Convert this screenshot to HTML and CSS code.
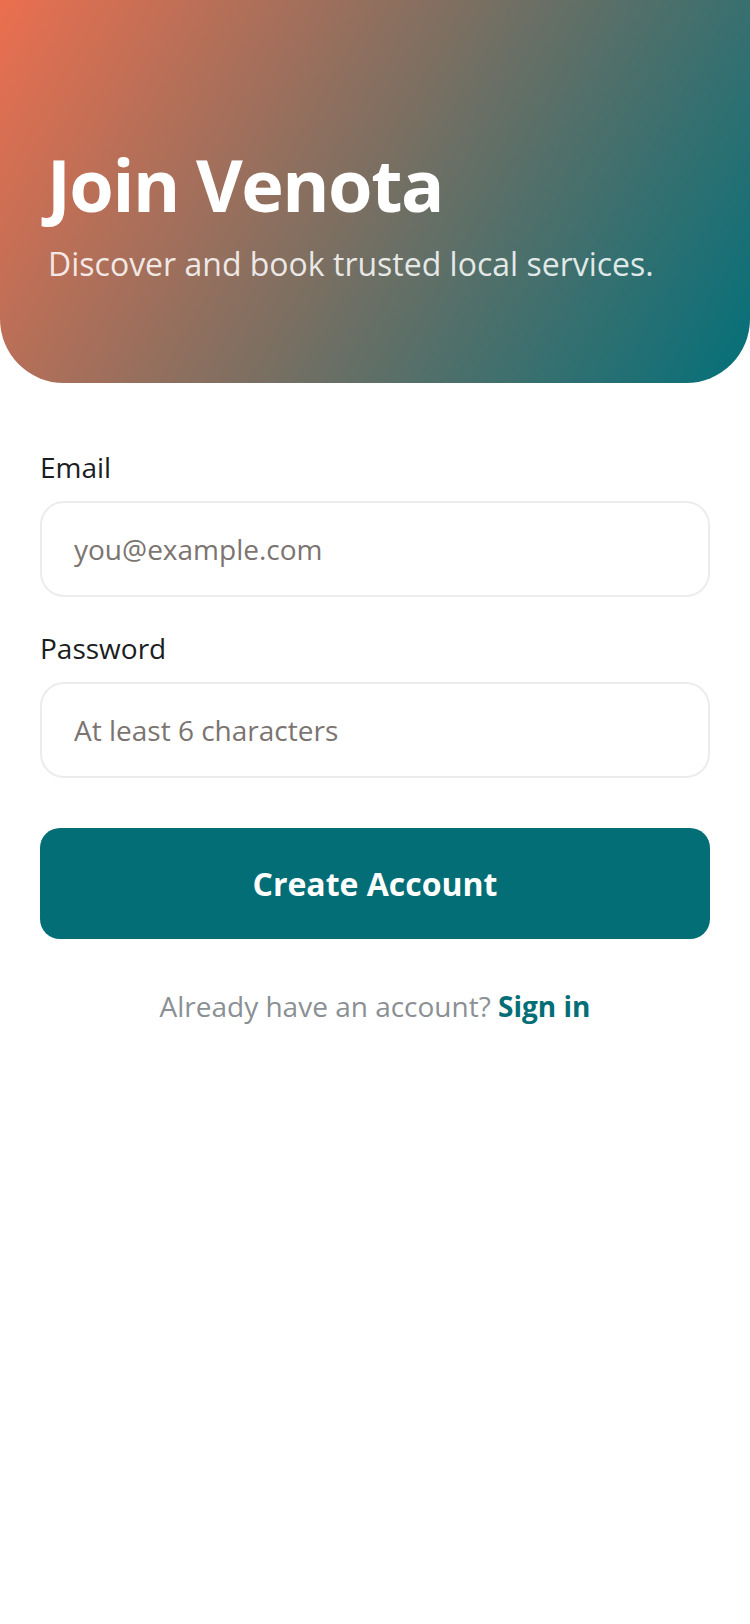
FILE: index.html
```html
<!DOCTYPE html>
<html lang="en">
<head>
    <meta charset="UTF-8">
    <meta name="viewport" content="width=device-width, initial-scale=1.0">
    <title>Join Venota</title>
    <link rel="stylesheet" href="styles.css">
</head>
<body>
    <div class="hero">
        <h1>Join Venota</h1>
        <p class="tagline">Discover and book trusted local services.</p>
    </div>
    <form class="signup" onsubmit="return false;">
        <label for="email">Email</label>
        <input type="email" id="email" placeholder="you@example.com">

        <label for="password">Password</label>
        <input type="password" id="password" placeholder="At least 6 characters">

        <button type="submit">Create Account</button>

        <p class="switch">Already have an account? <a href="#">Sign in</a></p>
    </form>
</body>
</html>
```

FILE: styles.css
```css
body {
    font-family: 'Open Sans', 'Noto Sans', sans-serif;
    background-color: #ffffff;
    margin: 0;
}
.hero {
    height: 383px;
    box-sizing: border-box;
    padding: 141px 44px 0;
    background: linear-gradient(120deg, #eb6f4f 0%, #786f62 50%, #03707a 100%);
    border-radius: 0 0 64px 64px;
}
h1 {
    margin: 0 0 0 3px;
    font-size: 72px;
    line-height: 1.2;
    font-weight: 700;
    letter-spacing: -1.5px;
    color: #ffffff;
}
.tagline {
    margin: 15px 0 0 4px;
    font-size: 32px;
    line-height: 1.4;
    color: rgba(255, 255, 255, 0.85);
}
.signup {
    display: flex;
    flex-direction: column;
    padding: 65px 40px 0;
}
label {
    font-size: 28px;
    line-height: 39px;
    color: #1b1d22;
    margin-bottom: 14px;
}
input {
    height: 96px;
    box-sizing: border-box;
    padding: 0 32px;
    margin-bottom: 32px;
    border: 2px solid #ececec;
    border-radius: 24px;
    font-family: inherit;
    font-size: 28px;
    color: #1b1d22;
    outline: none;
}
input::placeholder {
    color: #7b7470;
}
button {
    height: 111px;
    margin-top: 18px;
    background-color: #036e75;
    color: #ffffff;
    font-family: inherit;
    font-size: 32px;
    font-weight: 700;
    border: none;
    border-radius: 20px;
    cursor: pointer;
}
.switch {
    margin: 48px 0 0;
    text-align: center;
    font-size: 28px;
    line-height: 39px;
    color: #8a9094;
}
.switch a {
    color: #036e75;
    font-weight: 700;
    text-decoration: none;
}
```
